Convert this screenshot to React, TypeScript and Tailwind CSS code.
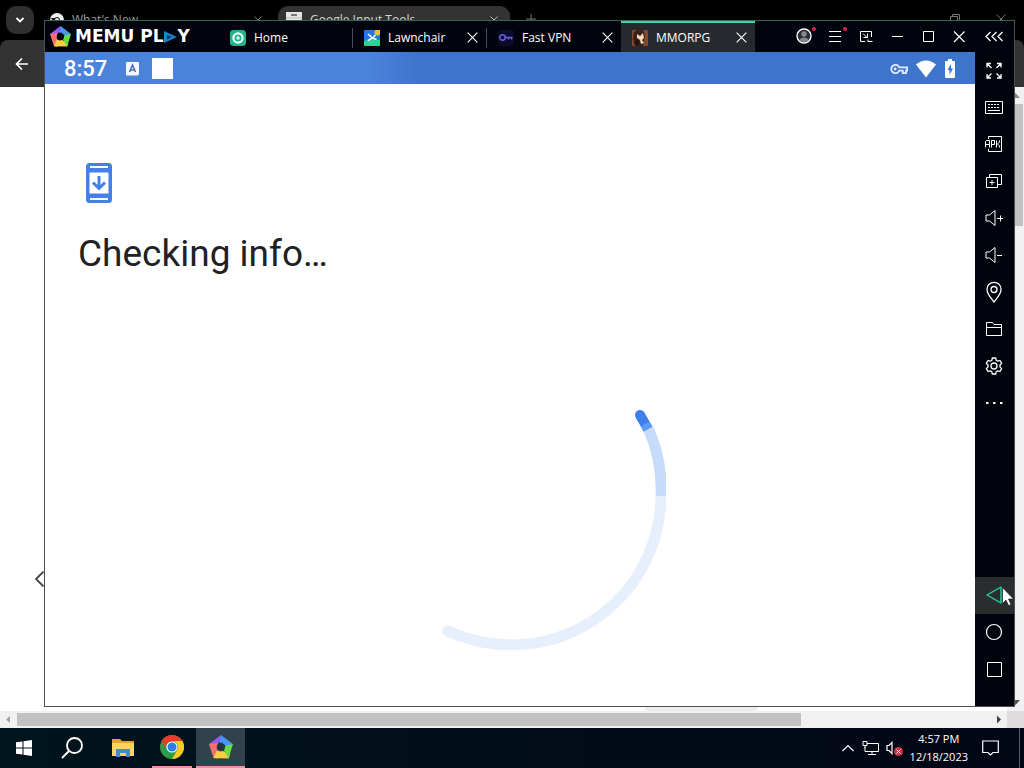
import { useState, type ReactNode } from "react";
import clsx from "clsx";

type IconProps = { children: ReactNode; className?: string; box?: string };

function Icon({ children, className = "size-[18px]", box = "0 0 18 18" }: IconProps) {
  return (
    <svg
      viewBox={box}
      className={clsx("shrink-0", className)}
      fill="none"
      stroke="currentColor"
      aria-hidden="true"
    >
      {children}
    </svg>
  );
}

function MemuLogo({ className, hole }: { className: string; hole: string }) {
  return (
    <svg viewBox="0 0 24 24" className={clsx("shrink-0", className)} aria-hidden="true">
      <path d="M12 0 24 9 19 12 16.500 10.500 10 7Z" fill="#4b93f4" />
      <path d="M12 0 10 7 8 10 7 14 0 9Z" fill="#9a5cf0" />
      <path d="M0 9 9 8 7.500 11 8 15 9 24 4.500 23Z" fill="#f4706c" />
      <path d="M4.500 23 8 15 11 16.500 14 16 21 20 19.500 23.500Z" fill="#f6cf45" />
      <path d="M24 9 16.500 10.500 15 15.500 19.500 23.500Z" fill="#6adb45" />
      <path d="M9.500 8.500 13 7.500 16 10.500 15 15 11 16 8 13Z" fill={hole} />
    </svg>
  );
}

function ChromeLogo({ className }: { className: string }) {
  return (
    <svg viewBox="0 0 24 24" className={clsx("shrink-0", className)} aria-hidden="true">
      <circle cx="12" cy="12" r="12" fill="#2d9c48" />
      <path d="M1.600 6A12 12 0 0 1 22.400 6H12A6 6 0 0 0 6.800 15Z" fill="#e23e2f" />
      <path d="M22.400 6A12 12 0 0 1 12 24L17.200 15A6 6 0 0 0 12 6Z" fill="#fbc926" />
      <circle cx="12" cy="12" r="5.600" fill="#fff" />
      <circle cx="12" cy="12" r="4.500" fill="#2f7be8" />
    </svg>
  );
}

function Cross({ className = "size-3" }: { className?: string }) {
  return (
    <Icon box="0 0 12 12" className={className}>
      <path d="M.7.7 11.300 11.300M11.300.7.7 11.300" strokeWidth="1.200" />
    </Icon>
  );
}

const speaker = <path d="M1 6H4.500L10 1.500V16.500L4.500 12H1Z" />;

const tools = [
  {
    label: "Full screen",
    icon: (
      <path
        d="M2 6.500V2.500H6M2 2.500 6.500 7M12 2.500H16V6.500M16 2.500 11.500 7M2 13V17H6M2 17 6.500 12.500M16 13V17H12M16 17 11.500 12.500"
        strokeWidth="1.300"
      />
    ),
  },
  {
    label: "Key mapping",
    icon: (
      <>
        <path d="M.5 3.500H17.500V15.500H.5Z" />
        <path d="M3 6.500H15M3 9.500H15" strokeDasharray="2 1" />
        <path d="M3 12.500H15" />
      </>
    ),
  },
  {
    label: "Install APK",
    icon: (
      <>
        <path d="M3.500 4V1.500H16.500V16.500H3.500V14" />
        <path d="M.5 12.500V6.500L1.500 5.500H4.500V12.500M.5 9.500H4.500M6.500 12.500V5.500H9.500V9.500H6.500M11.500 5.500V12.500M14.500 5.500V7L12.500 9 14.500 11V12.500" />
      </>
    ),
  },
  {
    label: "Multi-instance",
    icon: (
      <>
        <path d="M1.500 5.500H12.500V15.500H1.500Z" />
        <path d="M4.500 5V2.500H16.500V12.500H13M7 8V13M4.500 10.500H9.500" />
      </>
    ),
  },
  {
    label: "Volume up",
    icon: (
      <>
        {speaker}
        <path d="M12 9.500H18M15.500 6.500V12.500" />
      </>
    ),
  },
  {
    label: "Volume down",
    icon: (
      <>
        {speaker}
        <path d="M12 9.500H17" />
      </>
    ),
  },
  {
    label: "Location",
    icon: (
      <>
        <path
          d="M9 19C5.500 14.500 2 11 2 6.500C2 2 5 -.7 9 -.7S16 2 16 6.500C16 11 12.500 14.500 9 19Z"
          strokeWidth="1.300"
        />
        <circle cx="9" cy="6.500" r="3" strokeWidth="1.300" />
      </>
    ),
  },
  {
    label: "Shared folder",
    icon: <path d="M1.500 15.500V2.500H7.500L9 4.500H16.500V15.500ZM1.500 7.500H16.500" />,
  },
  {
    label: "Settings",
    icon: (
      <>
        <path
          d="M7.300 1H10.700L11.200 3.300 12.700 4.200 15 3.500 16.700 6.400 15 8V10L16.700 11.600 15 14.500 12.700 13.800 11.200 14.700 10.700 17H7.300L6.800 14.700 5.300 13.800 3 14.500 1.300 11.600 3 10V8L1.300 6.400 3 3.500 5.300 4.200 6.800 3.300Z"
          strokeWidth="1.300"
          strokeLinejoin="round"
        />
        <circle cx="9" cy="9" r="3" strokeWidth="1.300" />
      </>
    ),
  },
  {
    label: "More",
    icon: <path d="M1 9H3.500M8 9H10.500M15 9H17.500" strokeWidth="2" />,
  },
];

const navKeys = [
  {
    label: "Back",
    icon: <path d="M2 9 16 1V17Z" strokeWidth="1.400" strokeLinejoin="round" />,
  },
  { label: "Home", icon: <circle cx="9" cy="9" r="7.500" strokeWidth="1.200" /> },
  { label: "Recents", icon: <path d="M2.500 2.500H16.500V16.500H2.500Z" /> },
];

const windowButtons = [
  {
    label: "Account",
    badge: true,
    icon: (
      <>
        <circle cx="9" cy="9" r="7" fill="#2a2d33" strokeWidth="1.400" />
        <circle cx="9" cy="7" r="2.700" fill="#85888d" stroke="none" />
        <path d="M4.500 13.500C5 9.500 13 9.500 13.500 13.500Q9 17 4.500 13.500Z" fill="#85888d" stroke="none" />
      </>
    ),
  },
  { label: "Menu", badge: true, icon: <path d="M3 4.500H15M3 9.500H15M3 14.500H15" /> },
  {
    label: "Mini window",
    icon: (
      <path d="M8 14.500H3.500V4.500H14.500V10M6 6.500 10 10.500M10.500 6.500V10.500H6.500M11 14.500H15.500M11 12.500V15" />
    ),
  },
  { label: "Minimize", icon: <path d="M4 9.500H15" /> },
  { label: "Maximize", icon: <path d="M4.500 4.500H14.500V14.500H4.500Z" /> },
  { label: "Close window", icon: <path d="M4 4.500 14.500 15M14.500 4.500 4 15" strokeWidth="1.200" /> },
];

const tabs = [
  {
    id: "home",
    label: "Home",
    closable: false,
    icon: (
      <svg viewBox="0 0 16 16" className="size-4" aria-hidden="true">
        <rect width="16" height="16" rx="3.500" fill="#25b18b" />
        <circle cx="8" cy="8" r="4.600" fill="#25b18b" stroke="#eafff8" strokeWidth="2.200" />
        <circle cx="8" cy="8" r="1.700" fill="#eafff8" />
      </svg>
    ),
  },
  {
    id: "lawnchair",
    label: "Lawnchair",
    closable: true,
    icon: (
      <svg viewBox="0 0 16 16" className="size-4" aria-hidden="true">
        <rect width="16" height="16" rx="1" fill="#2478e6" />
        <path d="M0 11 7 9 16 10V15Q16 16 15 16H1Q0 16 0 15Z" fill="#29d394" />
        <circle cx="13.500" cy="2.500" r="3" fill="#e2c92b" />
        <path d="M4 4 8.500 8 12.500 9.500M11.500 5 8.500 8 4 10.500" stroke="#fff" strokeWidth="1.500" fill="none" />
      </svg>
    ),
  },
  {
    id: "vpn",
    label: "Fast VPN",
    closable: true,
    icon: (
      <svg viewBox="0 0 16 16" className="size-4" fill="none" stroke="#6b5de0" aria-hidden="true">
        <rect width="16" height="16" rx="3" fill="#0b0b2c" stroke="none" />
        <circle cx="4.500" cy="7.500" r="2.700" strokeWidth="1.500" />
        <path d="M7 7.500H14.500M10.500 7.500V9.500M13.500 7.500V9.500" strokeWidth="1.500" />
      </svg>
    ),
  },
  {
    id: "mmorpg",
    label: "MMORPG",
    closable: true,
    icon: (
      <svg viewBox="0 0 16 16" className="size-4" aria-hidden="true">
        <rect width="16" height="16" rx="1" fill="#83492c" />
        <path d="M2 2 5 0H11L13 5 11 16H3L1 9Z" fill="#3b1f18" />
        <path d="M5 4 8 6 11 3 12 8 10 10 12 13 9 14 8 10 5 8Z" fill="#f0d8bd" />
        <path d="M2 12 6 9 7 14 4 16Z" fill="#27120f" />
      </svg>
    ),
  },
];

function BrowserWindow() {
  return (
    <div className="flex h-full flex-col bg-black text-xs">
      <div className="flex h-10 shrink-0 items-start pt-1.5">
        <button
          type="button"
          aria-label="Search tabs"
          className="ml-1.5 flex size-7 items-center justify-center rounded-[10px] bg-[#2f2f2f] text-white"
        >
          <Icon box="0 0 10 10" className="size-2.5">
            <path d="M1.500 3 5 6.500 8.500 3" strokeWidth="1.800" />
          </Icon>
        </button>
        <div className="ml-4 flex h-7 w-[224px] items-center gap-2 text-[#9c9c9c]">
          <svg viewBox="0 0 14 14" className="size-3.5" aria-hidden="true">
            <circle cx="7" cy="7" r="7" fill="#f2f2f2" />
            <path d="M1 5H7L3.500 9Z" fill="#111" />
            <circle cx="7" cy="7" r="2.500" fill="#f2f2f2" stroke="#111" />
          </svg>
          <span className="grow">What's New</span>
          <button type="button" aria-label="Close What's New" className="mr-3">
            <Cross className="size-2" />
          </button>
        </div>
        <div className="ml-1 flex h-[34px] w-[232px] items-start gap-2 rounded-t-[10px] bg-[#333333] pt-1.5 text-[#d6d6d6]">
          <svg viewBox="0 0 16 16" className="ml-2 size-4" aria-hidden="true">
            <rect width="16" height="16" fill="#e8e3e5" />
            <path d="M5 3H11" stroke="#555" strokeWidth="1.500" />
            <path d="M0 6H16" stroke="#bbb" />
          </svg>
          <span className="grow">Google Input Tools</span>
          <button type="button" aria-label="Close Google Input Tools" className="mt-1 mr-3">
            <Cross className="size-2" />
          </button>
        </div>
        <button type="button" aria-label="New tab" className="ml-4 pt-2 text-[#777777]">
          <Icon box="0 0 10 10" className="size-2.5">
            <path d="M5 0V10M0 5H10" />
          </Icon>
        </button>
        <div className="ml-auto flex gap-9 pt-2 pr-[18px] text-[#777777]">
          <button type="button" aria-label="Restore">
            <Icon box="0 0 10 10" className="size-2.5">
              <path d="M.5 2.500H7.500V9.500H.5ZM2.500 2V.5H9.500V7.500H8" />
            </Icon>
          </button>
          <button type="button" aria-label="Close browser">
            <Cross className="size-2.5" />
          </button>
        </div>
      </div>

      <div className="flex h-[47px] shrink-0 items-center rounded-t-lg bg-[#333333] pl-[15px] text-white">
        <button type="button" aria-label="Back">
          <Icon box="0 0 14 14" className="size-3.5">
            <path d="M13 7H2M7 1.500 1.500 7 7 12.500" strokeWidth="1.700" />
          </Icon>
        </button>
      </div>

      <div className="flex min-h-0 grow bg-white">
        <div className="flex min-w-0 grow flex-col">
          <button type="button" aria-label="Previous" className="mt-auto mb-[119px] ml-[35px] w-4 text-[#444444]">
            <Icon box="0 0 16 16" className="size-4">
              <path d="M8.500.5 1 8 8.500 15.500" strokeWidth="1.800" />
            </Icon>
          </button>
          <div className="ml-[645px] h-[5px] w-28 shrink-0 bg-[#ededed]" />
        </div>
        <div className="flex w-[17px] shrink-0 flex-col items-center justify-between bg-[#f1f1f1] text-[#8a8a8a]">
          <Icon box="0 0 17 17" className="size-[17px]">
            <path d="M4 11 8.500 6 13 11Z" fill="currentColor" stroke="none" />
          </Icon>
          <div className="mb-auto h-[122px] w-[15px] bg-[#c1c1c1]" />
          <Icon box="0 0 17 17" className="size-[17px] text-[#505050]">
            <path d="M4 6 8.500 11 13 6Z" fill="currentColor" stroke="none" />
          </Icon>
        </div>
      </div>

      <div className="flex h-[17px] shrink-0 items-center bg-[#f1f1f1]">
        <Icon box="0 0 17 17" className="size-[17px] text-[#a3a3a3]">
          <path d="M10 5 6 8.500 10 12Z" fill="currentColor" stroke="none" />
        </Icon>
        <div className="h-[13px] w-[784px] bg-[#c1c1c1]" />
        <Icon box="0 0 17 17" className="ml-auto size-[17px] text-[#404040]">
          <path d="M7 4.500 11 8.500 7 12.500Z" fill="currentColor" stroke="none" />
        </Icon>
        <div className="h-full w-[17px] bg-[#dfdcde]" />
      </div>
    </div>
  );
}

function TitleBar() {
  const [active, setActive] = useState("mmorpg");

  return (
    <header className="flex h-[31px] shrink-0 bg-[#02040d] text-white">
      <div className="flex w-[174px] shrink-0 items-center gap-1 pl-[5px]">
        <MemuLogo className="size-[21px]" hole="#02040d" />
        <div className="flex items-center font-['DejaVu_Sans'] text-[17px] leading-none font-bold whitespace-nowrap">
          MEMU PL
          <Icon box="0 0 14 12" className="h-3 w-3.5">
            <path d="M1 0 14 6 1 12Z" fill="#1684d0" stroke="none" />
            <path d="M4 4 9 6 4 8.500Z" fill="#0a3767" stroke="none" />
          </Icon>
          Y
        </div>
      </div>

      <div role="tablist" className="flex">
        {tabs.map((tab, index) => {
          const selected = tab.id === active;

          return (
            <div
              key={tab.id}
              className={clsx(
                "flex w-[134px] items-center border-t-2",
                selected ? "border-[#3fd6b0] bg-[#262a2e]" : "border-transparent",
              )}
            >
              <button
                type="button"
                role="tab"
                aria-selected={selected}
                onClick={() => setActive(tab.id)}
                className="flex h-full grow items-center gap-2 pl-[11px] text-xs"
              >
                {tab.icon}
                {tab.label}
              </button>
              {tab.closable ? (
                <button type="button" aria-label={`Close ${tab.label}`} className="mr-2">
                  <Cross className="size-[11px]" />
                </button>
              ) : null}
              {index < 2 ? <span className="h-5 w-px bg-[#4a4d55]" /> : null}
            </div>
          );
        })}
      </div>

      <div className="ml-auto flex">
        {windowButtons.map((button) => (
          <button
            key={button.label}
            type="button"
            aria-label={button.label}
            className="relative flex w-[31px] items-center justify-center pr-px pb-px"
          >
            <Icon>{button.icon}</Icon>
            {button.badge ? (
              <span className="absolute top-1.5 right-1 size-1 rounded-full bg-[#e0224e]" />
            ) : null}
          </button>
        ))}
        <button
          type="button"
          aria-label="Collapse sidebar"
          className="flex w-[39px] items-center justify-center pr-px pb-px"
        >
          <Icon>
            <path
              d="M5.500 5 1 9.500 5.500 14M11.500 5 7 9.500 11.500 14M17.500 5 13 9.500 17.500 14"
              strokeWidth="1.300"
            />
          </Icon>
        </button>
      </div>
    </header>
  );
}

function StatusBar() {
  return (
    <div className="flex h-8 shrink-0 items-center bg-linear-to-r from-[#4b82da] from-35% to-[#3f74cd] to-40% px-[19px] pt-px text-white">
      <span className="w-[61px] font-['Roboto'] text-[22px] font-medium">8:57</span>
      <svg viewBox="0 0 15 15" className="size-[15px]" aria-hidden="true">
        <path d="M1 2Q1 1 2 1H13Q14 1 14 2V13L13 14.500 1 14.500Z" fill="#f4f7fd" />
        <path d="M4.500 11 7.500 4 10.500 11M5.500 9H9.500" stroke="#4a6fc0" strokeWidth="1.600" fill="none" />
      </svg>
      <span className="ml-3 size-[21px] bg-white" />

      <div className="ml-auto flex items-center gap-2">
        <Icon box="0 0 18 12" className="h-3 w-[18px] text-[#e3edff]">
          <path
            d="M9.300 4.300H17.200V7.700H16V10.200H12.800V7.700H9.300A4.200 4.200 0 1 1 9.300 4.300Z"
            strokeWidth="1.800"
          />
          <circle cx="5.200" cy="6" r="1.400" fill="currentColor" stroke="none" />
        </Icon>
        <svg viewBox="0 0 20 18" className="h-[18px] w-5" fill="#fff" aria-hidden="true">
          <path d="M0 4.500Q10 -3.500 20 4.500L10 17.500Z" />
        </svg>
        <svg viewBox="0 0 12 19" className="h-[19px] w-3" aria-hidden="true">
          <path d="M4 0H8V2H10Q11 2 11 3V18Q11 19 10 19H2Q1 19 1 18V3Q1 2 2 2H4Z" fill="#fff" />
          <path d="M7 5 3.500 11H5.500V16L9 9.500H7Z" fill="#3f74cd" />
        </svg>
      </div>
    </div>
  );
}

function UpdateScreen() {
  return (
    <main className="min-h-0 grow overflow-hidden bg-white px-[33px] pt-[79px]">
      <svg viewBox="0 0 26 40" className="ml-2 h-10 w-[26px]" aria-hidden="true">
        <rect width="26" height="40" rx="3.500" fill="#4480e8" />
        <path d="M4 4H22M4 36H22" stroke="#fff" strokeWidth="2" />
        <path d="M3.500 9.500H22.500V30.500H3.500Z" fill="#fff" />
        <path d="M13 13V25M7 19.500 13 25.500 19 19.500" stroke="#4480e8" strokeWidth="3" fill="none" />
      </svg>
      <h1 className="mt-7 font-['Roboto'] text-[37px] leading-[46px] text-[#202124]">
        Checking info…
      </h1>
      <svg
        viewBox="0 0 312 312"
        className="mx-auto mt-[61px] size-[312px]"
        fill="none"
        strokeWidth="11"
        strokeLinecap="round"
        role="img"
        aria-label="Loading"
      >
        <path d="M307 158A150 150 0 0 1 94 293" stroke="#e7effc" strokeLinecap="butt" />
        <path d="M94 293 94 293" stroke="#e7effc" />
        <path d="M294 90A150 150 0 0 1 307 158" stroke="#c7dcfb" strokeLinecap="butt" />
        <path d="M286 77 294 91" stroke="#3f7fe9" strokeLinecap="butt" strokeWidth="10" />
        <path d="M286 77 286 77" stroke="#3f7fe9" strokeWidth="10" />
        <path d="M291 86 294 91" stroke="#609af0" strokeLinecap="butt" strokeWidth="10" />
      </svg>
    </main>
  );
}

function Sidebar() {
  return (
    <aside className="flex w-[39px] shrink-0 flex-col bg-[#02040d] pb-[18px] text-white">
      {tools.map((tool) => (
        <button
          key={tool.label}
          type="button"
          aria-label={tool.label}
          className="flex h-[37px] items-center justify-center pr-px pb-px"
        >
          <Icon className="size-[18px] overflow-visible">{tool.icon}</Icon>
        </button>
      ))}
      <div className="mt-auto">
        {navKeys.map((key) => {
          const hovered = key.label === "Back";

          return (
            <button
              key={key.label}
              type="button"
              aria-label={key.label}
              className={clsx(
                "relative flex h-[37px] w-full items-center justify-center pr-px pb-px",
                hovered && "bg-[#292d30] text-[#2bd399]",
              )}
            >
              <Icon>{key.icon}</Icon>
              {/* Mouse pointer */}
              {hovered ? (
                <svg viewBox="0 0 12 19" className="absolute top-2.5 left-[27px] h-[19px] w-3" aria-hidden="true">
                  <path
                    d="M.5.5V16.500L4 13 6.500 18.500 9 17.500 6.500 12H11.500Z"
                    fill="#fff"
                    stroke="#111"
                    strokeWidth=".6"
                  />
                </svg>
              ) : null}
            </button>
          );
        })}
      </div>
    </aside>
  );
}

function Taskbar() {
  return (
    <footer className="flex h-10 shrink-0 bg-linear-to-r from-[#00151d] to-[#020615] text-white">
      <button type="button" aria-label="Start" className="flex w-12 items-center justify-center">
        <svg viewBox="0 0 16 16" className="size-4" fill="#fff" aria-hidden="true">
          <path d="M0 2.300 6.500 1.400V7.500H0ZM7.500 1.200 16 0V7.500H7.500ZM0 8.500H6.500V14.600L0 13.700ZM7.500 8.500H16V16L7.500 14.800Z" />
        </svg>
      </button>
      <button type="button" aria-label="Search" className="flex w-12 items-center justify-center">
        <Icon box="0 0 22 22" className="size-[22px]">
          <circle cx="13.500" cy="8.500" r="7.500" strokeWidth="1.900" />
          <path d="M8 14 1 21" strokeWidth="2" />
        </Icon>
      </button>
      <button type="button" aria-label="File Explorer" className="ml-0.5 flex w-[49px] items-center justify-center">
        <svg viewBox="0 0 22 18" className="h-[18px] w-[22px]" aria-hidden="true">
          <path d="M0 0H8L10 2H22V17H0Z" fill="#e2a52f" />
          <path d="M0 4H22V17H0Z" fill="#fbd563" />
          <path d="M4 10H18V18H14V14H8V18H4Z" fill="#3b8fd0" />
        </svg>
      </button>
      <button type="button" aria-label="Google Chrome" className="flex w-[49px] flex-col items-center">
        <span className="flex grow items-center">
          <ChromeLogo className="size-6" />
        </span>
        <span className="h-0.5 w-10 bg-[#ef929c]" />
      </button>
      <button type="button" aria-label="MEmu" className="flex w-[49px] flex-col items-center bg-[#30424b]">
        <span className="flex grow items-center">
          <MemuLogo className="size-6" hole="#24343c" />
        </span>
        <span className="h-0.5 w-full bg-[#ef929c]" />
      </button>

      <div className="ml-auto flex items-center">
        <button type="button" aria-label="Show hidden icons">
          <Icon box="0 0 12 12" className="size-3">
            <path d="M.5 9 6 3.500 11.500 9" strokeWidth="1.200" />
          </Icon>
        </button>
        <button type="button" aria-label="Network" className="ml-2">
          <Icon box="0 0 17 16" className="h-4 w-[17px]">
            <path d="M5 3.500H16.500V11.500H3V7M10 11.500V14.500M6 14.500H14M1 1.500H5V5.500H1ZM3 5.500V8" />
          </Icon>
        </button>
        <button type="button" aria-label="Volume muted" className="ml-[7px]">
          <Icon box="0 0 17 16" className="h-4 w-[17px]">
            <path d="M1 5.500H3L6 2.500V13.500L3 10.500H1Z" strokeWidth="1.200" />
            <circle cx="12.500" cy="11.500" r="4.500" fill="#cc3444" stroke="none" />
            <path d="M10.500 9.500 14.500 13.500M14.500 9.500 10.500 13.500" />
          </Icon>
        </button>
        <button type="button" className="ml-[7px] flex flex-col items-center text-[11px] leading-[18px]">
          <span>4:57 PM</span>
          <span>12/18/2023</span>
        </button>
        <button type="button" aria-label="Notifications" className="ml-3.5">
          <Icon box="0 0 17 16" className="h-4 w-[17px]">
            <path d="M.7 1H16.300V12.500H11L8.500 15 6 12.500H.7Z" strokeWidth="1.200" />
          </Icon>
        </button>
        <span className="ml-5 h-10 w-[5px] border-l border-[#555a66]" />
      </div>
    </footer>
  );
}

export default function App() {
  return (
    <div className="flex h-screen flex-col overflow-hidden font-['Open_Sans',sans-serif]">
      <div className="relative min-h-0 grow">
        <BrowserWindow />
        <section
          aria-label="MEmu Play"
          className="absolute top-5 right-[9px] bottom-[21px] left-11 flex flex-col border border-[#4c5150] border-t-[#35635c] bg-white"
        >
          <TitleBar />
          <div className="flex min-h-0 grow">
            <div className="flex min-w-0 grow flex-col">
              <StatusBar />
              <UpdateScreen />
            </div>
            <Sidebar />
          </div>
        </section>
      </div>
      <Taskbar />
    </div>
  );
}
